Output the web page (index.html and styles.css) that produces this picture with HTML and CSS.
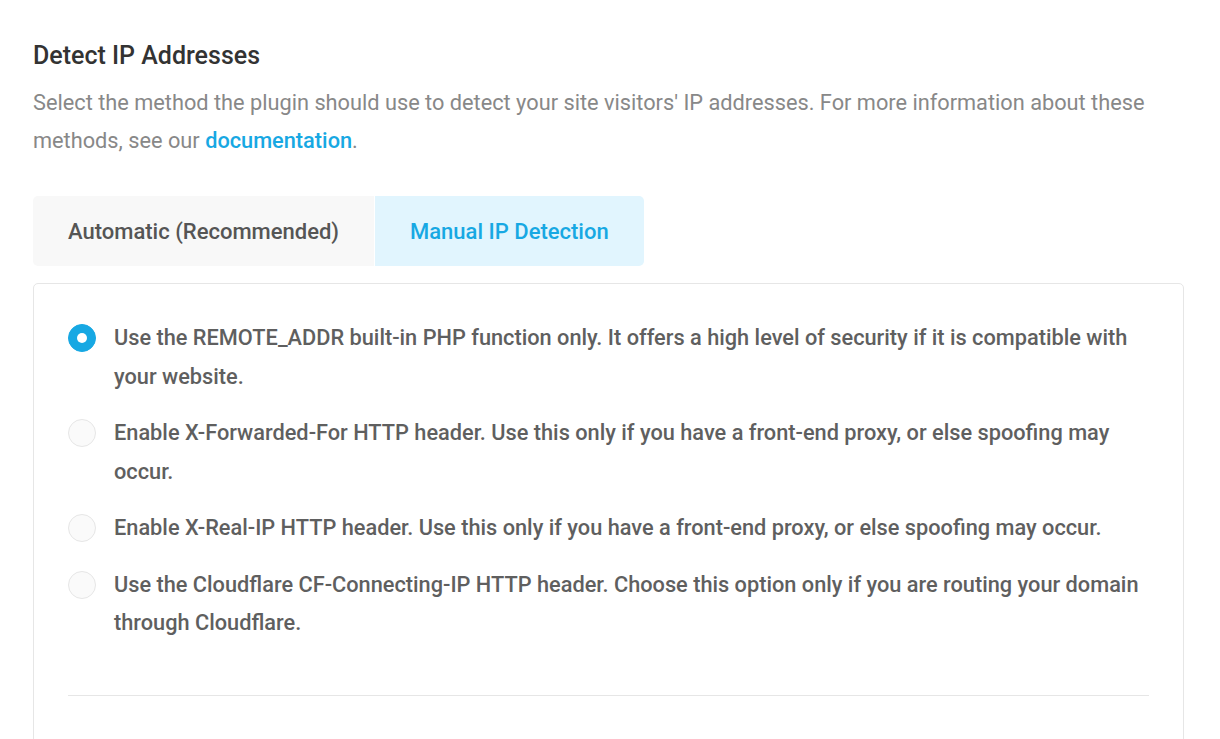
FILE: index.html
```html
<!DOCTYPE html>
<html lang="en">
<head>
    <meta charset="UTF-8">
    <meta name="viewport" content="width=device-width, initial-scale=1.0">
    <title>Detect IP Addresses</title>
    <link rel="stylesheet" href="styles.css">
</head>
<body>
    <div class="settings-section">
        <h2 class="section-title">Detect IP Addresses</h2>

        <p class="section-desc">
            Select the method the plugin should use to detect your site visitors' IP addresses. For more information about these methods, see our <a href="#" class="doc-link">documentation</a>.
        </p>

        <div class="tabs">
            <button class="tab">Automatic (Recommended)</button>
            <button class="tab tab-active">Manual IP Detection</button>
        </div>

        <div class="tab-panel">
            <div class="options">
                <label class="option">
                    <span class="radio radio-checked"></span>
                    <span class="option-text">Use the REMOTE_ADDR built-in PHP function only. It offers a high level of security if it is compatible with your website.</span>
                </label>
                <label class="option">
                    <span class="radio"></span>
                    <span class="option-text">Enable X-Forwarded-For HTTP header. Use this only if you have a front-end proxy, or else spoofing may occur.</span>
                </label>
                <label class="option">
                    <span class="radio"></span>
                    <span class="option-text">Enable X-Real-IP HTTP header. Use this only if you have a front-end proxy, or else spoofing may occur.</span>
                </label>
                <label class="option">
                    <span class="radio"></span>
                    <span class="option-text">Use the Cloudflare CF-Connecting-IP HTTP header. Choose this option only if you are routing your domain through Cloudflare.</span>
                </label>
            </div>

            <div class="divider"></div>
        </div>
    </div>
</body>
</html>
```

FILE: styles.css
```css
* {
    margin: 0;
    padding: 0;
    box-sizing: border-box;
}

body {
    font-family: Roboto, "Noto Sans", sans-serif;
    background: #fff;
    color: #333;
    padding: 40px 36px 0 33px;
}

.settings-section {
    max-width: 1151px;
}

.section-title {
    font-size: 25px;
    font-weight: 500;
    line-height: 32px;
    color: #333;
    margin-bottom: 12px;
}

.section-desc {
    font-size: 21.75px;
    line-height: 38px;
    color: #888;
    margin-bottom: 36px;
}

.doc-link {
    color: #17a8e3;
    font-weight: 500;
    text-decoration: none;
}

.tabs {
    display: flex;
    gap: 1px;
    margin-bottom: 17px;
}

.tab {
    font-family: inherit;
    font-size: 22px;
    font-weight: 500;
    color: #555;
    background: #f8f8f8;
    border: none;
    height: 70px;
    padding: 0 35px;
    cursor: pointer;
}

.tab:first-child {
    border-radius: 5px 0 0 5px;
}

.tab:last-child {
    border-radius: 0 5px 5px 0;
}

.tab-active {
    background: #e1f5fe;
    color: #17a8e3;
}

.tab-panel {
    border: 1px solid #e6e6e6;
    border-radius: 5px;
    padding: 35px 34px 50px;
}

.options {
    display: flex;
    flex-direction: column;
    gap: 18px;
}

.option {
    display: flex;
    align-items: flex-start;
    gap: 18px;
    cursor: pointer;
}

.radio {
    flex: none;
    width: 28px;
    height: 28px;
    margin-top: 5px;
    border-radius: 50%;
    background: #fafafa;
    border: 1px solid #e6e6e6;
}

.radio-checked {
    background: #17a8e3;
    border-color: #17a8e3;
    display: flex;
    align-items: center;
    justify-content: center;
}

.radio-checked::after {
    content: "";
    width: 10px;
    height: 10px;
    border-radius: 50%;
    background: #fff;
}

.option-text {
    font-size: 21.75px;
    font-weight: 500;
    line-height: 38.5px;
    color: #5f5f5f;
}

.divider {
    height: 1px;
    background: #e6e6e6;
    margin-top: 52px;
}
```
